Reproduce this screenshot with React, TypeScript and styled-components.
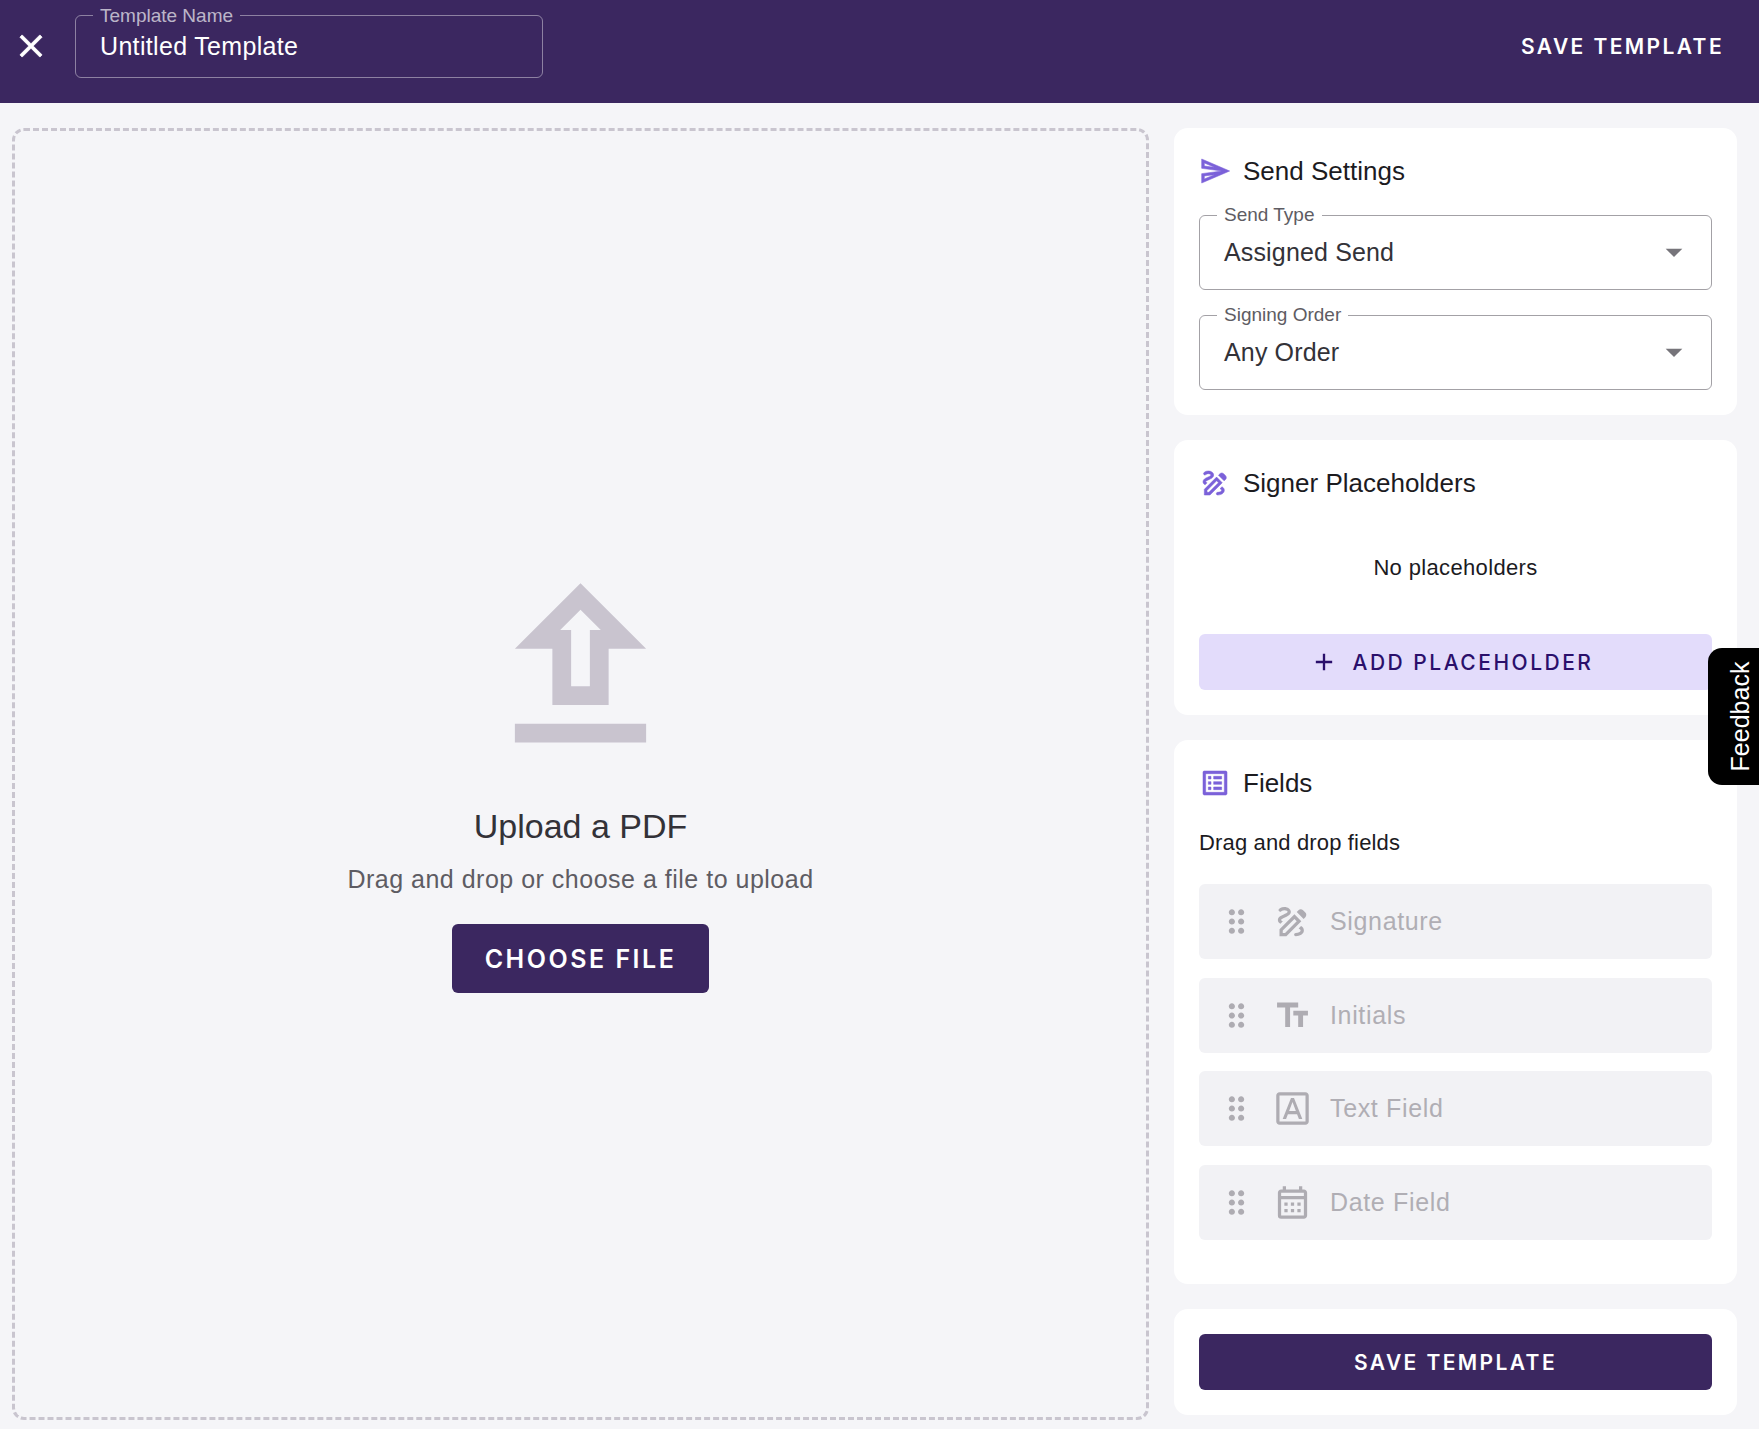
import { ReactNode } from "react";
import styled, { createGlobalStyle } from "styled-components";
import {
  MdAdd,
  MdArrowDropDown,
  MdClose,
  MdDragIndicator,
  MdOutlineCalendarMonth,
  MdOutlineDraw,
  MdOutlineFontDownload,
  MdOutlineListAlt,
  MdOutlineSend,
  MdTextFields,
} from "react-icons/md";

const colors = {
  primary: "#3b2760",
  accent: "#7b61d9",
  page: "#f5f5f8",
  ink: "#1c1b1f",
  muted: "#b0aeb4",
};

const GlobalStyle = createGlobalStyle`
  html, body {
    margin: 0;
    padding: 0;
    background: ${colors.page};
    font-family: "Liberation Sans", Arial, sans-serif;
  }
  * {
    box-sizing: border-box;
  }
`;

const fieldRows = [
  { name: "Signature", icon: <MdOutlineDraw /> },
  { name: "Initials", icon: <MdTextFields /> },
  { name: "Text Field", icon: <MdOutlineFontDownload /> },
  { name: "Date Field", icon: <MdOutlineCalendarMonth /> },
];

const UploadIcon = () => (
  <UploadSvg viewBox="0 0 24 24" fill="currentColor">
    <path d="M9 16h6v-6h4l-7-7-7 7h4v6zm3-10.17L14.17 8H13v6h-2V8H9.83L12 5.83zM5 18h14v2H5z" />
  </UploadSvg>
);

const SelectBox = ({ label, value }: { label: string; value: string }) => (
  <Select>
    <Outline>
      <OutlineLabel>{label}</OutlineLabel>
    </Outline>
    <SelectValue>{value}</SelectValue>
    <MdArrowDropDown className="arrow" />
  </Select>
);

const CardHeading = ({ icon, children }: { icon: ReactNode; children: ReactNode }) => (
  <Heading>
    {icon}
    <span>{children}</span>
  </Heading>
);

const App = () => (
  <Page>
    <GlobalStyle />
    <TopBar>
      <CloseButton>
        <MdClose />
      </CloseButton>
      <NameField>
        <Outline $light>
          <OutlineLabel $light>Template Name</OutlineLabel>
        </Outline>
        <NameValue>Untitled Template</NameValue>
      </NameField>
      <TopSave>SAVE TEMPLATE</TopSave>
    </TopBar>

    <Main>
      <DropZone>
        <UploadIcon />
        <DropTitle>Upload a PDF</DropTitle>
        <DropHint>Drag and drop or choose a file to upload</DropHint>
        <ChooseButton>CHOOSE FILE</ChooseButton>
      </DropZone>

      <Sidebar>
        <Card>
          <CardHeading icon={<MdOutlineSend />}>Send Settings</CardHeading>
          <SelectStack>
            <SelectBox label="Send Type" value="Assigned Send" />
            <SelectBox label="Signing Order" value="Any Order" />
          </SelectStack>
        </Card>

        <Card>
          <CardHeading icon={<MdOutlineDraw />}>Signer Placeholders</CardHeading>
          <EmptyNote>No placeholders</EmptyNote>
          <AddButton>
            <MdAdd />
            ADD PLACEHOLDER
          </AddButton>
        </Card>

        <FieldsCard>
          <CardHeading icon={<MdOutlineListAlt />}>Fields</CardHeading>
          <FieldsHint>Drag and drop fields</FieldsHint>
          <FieldList>
            {fieldRows.map((row) => (
              <FieldRow key={row.name}>
                <MdDragIndicator className="grip" />
                <FieldIcon>{row.icon}</FieldIcon>
                {row.name}
              </FieldRow>
            ))}
          </FieldList>
        </FieldsCard>

        <Card>
          <SaveButton>SAVE TEMPLATE</SaveButton>
        </Card>
      </Sidebar>
    </Main>

    <FeedbackTab>
      <span>Feedback</span>
    </FeedbackTab>
  </Page>
);

export default App;

const Page = styled.div`
  position: relative;
  width: 1759px;
  height: 1429px;
  overflow: hidden;
`;

const TopBar = styled.header`
  display: flex;
  align-items: center;
  height: 103px;
  padding: 0 35px 11px 12px;
  background: ${colors.primary};
  color: white;
`;

const CloseButton = styled.div`
  display: flex;
  font-size: 38px;
  margin-right: 25px;

  svg {
    stroke: currentColor;
    stroke-width: 0.5;
  }

  path[fill="none"] {
    stroke: none;
  }
`;

const NameField = styled.div`
  position: relative;
  display: flex;
  align-items: center;
  width: 468px;
  height: 62px;
  margin-top: 1px;
  padding-left: 25px;
`;

const Outline = styled.fieldset<{ $light?: boolean }>`
  position: absolute;
  inset: -5px 0 0;
  margin: 0;
  padding: 0 0 0 17px;
  border: 1px solid ${(p) => (p.$light ? "rgba(255, 255, 255, 0.42)" : "#a3a1a6")};
  border-radius: 6px;
  pointer-events: none;
`;

const OutlineLabel = styled.legend<{ $light?: boolean }>`
  height: 10px;
  padding: 0 7px;
  font-size: 19px;
  line-height: 10px;
  color: ${(p) => (p.$light ? "rgba(255, 255, 255, 0.68)" : "#5e5c63")};
`;

const NameValue = styled.div`
  font-size: 25px;
  letter-spacing: 0.33px;
`;

const TopSave = styled.div`
  margin-left: auto;
  font-family: Inter, "Liberation Sans", sans-serif;
  font-size: 21px;
  font-weight: 600;
  letter-spacing: 2.4px;
`;

const Main = styled.main`
  display: flex;
  gap: 25px;
  padding: 25px 22px 9px 12px;
`;

const DropZone = styled.section`
  display: flex;
  flex: 1;
  flex-direction: column;
  align-items: center;
  justify-content: center;
  height: 1292px;
  border: 3px dashed #c9c5cf;
  border-radius: 12px;
`;

const UploadSvg = styled.svg`
  width: 225px;
  height: 225px;
  color: #c9c4cf;
`;

const DropTitle = styled.h1`
  margin: 23px 0 0;
  font-size: 34px;
  font-weight: 400;
  line-height: 46px;
  color: #333238;
`;

const DropHint = styled.p`
  margin: 15px 0 0;
  font-size: 25px;
  line-height: 30px;
  letter-spacing: 0.5px;
  color: #5e5c63;
`;

const ChooseButton = styled.button`
  width: 257px;
  height: 69px;
  margin-top: 30px;
  border: none;
  border-radius: 6px;
  background: ${colors.primary};
  color: white;
  font-family: Inter, "Liberation Sans", sans-serif;
  font-size: 25px;
  font-weight: 600;
  letter-spacing: 2.5px;
`;

const Sidebar = styled.aside`
  display: flex;
  flex-direction: column;
  gap: 25px;
  width: 563px;
`;

const Card = styled.div`
  padding: 25px;
  border-radius: 14px;
  background: white;
`;

const FieldsCard = styled(Card)`
  padding-bottom: 44.5px;
`;

const Heading = styled.div`
  display: flex;
  align-items: center;
  gap: 12px;
  height: 36px;
  font-size: 26px;
  color: ${colors.ink};

  svg {
    font-size: 32px;
    color: ${colors.accent};
    stroke: currentColor;
    stroke-width: 0.4;
  }

  path[fill="none"] {
    stroke: none;
  }
`;

const SelectStack = styled.div`
  display: flex;
  flex-direction: column;
  gap: 25px;
  margin-top: 26px;
`;

const Select = styled.div`
  position: relative;
  display: flex;
  align-items: center;
  justify-content: space-between;
  height: 75px;
  padding: 0 18px 0 25px;

  .arrow {
    margin-top: -1px;
    font-size: 40px;
    color: #76747a;
  }
`;

const SelectValue = styled.div`
  font-size: 25px;
  letter-spacing: 0.15px;
  color: #333238;
`;

const EmptyNote = styled.div`
  display: flex;
  align-items: center;
  justify-content: center;
  height: 133px;
  font-size: 22px;
  letter-spacing: 0.35px;
  color: ${colors.ink};
`;

const AddButton = styled.button`
  display: flex;
  align-items: center;
  justify-content: center;
  gap: 15px;
  width: 100%;
  height: 56px;
  padding: 0 8px 0 0;
  border: none;
  border-radius: 6px;
  background: #e3dcfb;
  color: #2a0f6b;
  font-family: Inter, "Liberation Sans", sans-serif;
  font-size: 21px;
  font-weight: 500;
  letter-spacing: 2.5px;

  svg {
    font-size: 28px;
  }
`;

const FieldsHint = styled.div`
  margin: 27px 0 26px;
  font-size: 22px;
  line-height: 30px;
  letter-spacing: 0.15px;
  color: ${colors.ink};
`;

const FieldList = styled.div`
  display: flex;
  flex-direction: column;
  gap: 18.5px;
`;

const FieldRow = styled.div`
  display: flex;
  align-items: center;
  height: 75px;
  padding-left: 19px;
  border-radius: 6px;
  background: #f2f2f5;
  color: ${colors.muted};
  font-size: 25px;
  letter-spacing: 0.65px;

  .grip {
    font-size: 37px;
    color: #aeacb2;
  }
`;

const FieldIcon = styled.span`
  display: flex;
  margin: 0 18px;
  font-size: 39px;
  color: #aeacb2;
`;

const SaveButton = styled.button`
  width: 100%;
  height: 56px;
  border: none;
  border-radius: 6px;
  background: ${colors.primary};
  color: white;
  font-family: Inter, "Liberation Sans", sans-serif;
  font-size: 21px;
  font-weight: 600;
  letter-spacing: 2.4px;
`;

const FeedbackTab = styled.div`
  position: absolute;
  top: 648px;
  right: 0;
  display: flex;
  align-items: center;
  justify-content: center;
  width: 51px;
  height: 137px;
  padding-left: 14px;
  border-radius: 14px 0 0 14px;
  background: black;
  color: white;
  font-size: 25px;

  span {
    transform: rotate(-90deg);
  }
`;
